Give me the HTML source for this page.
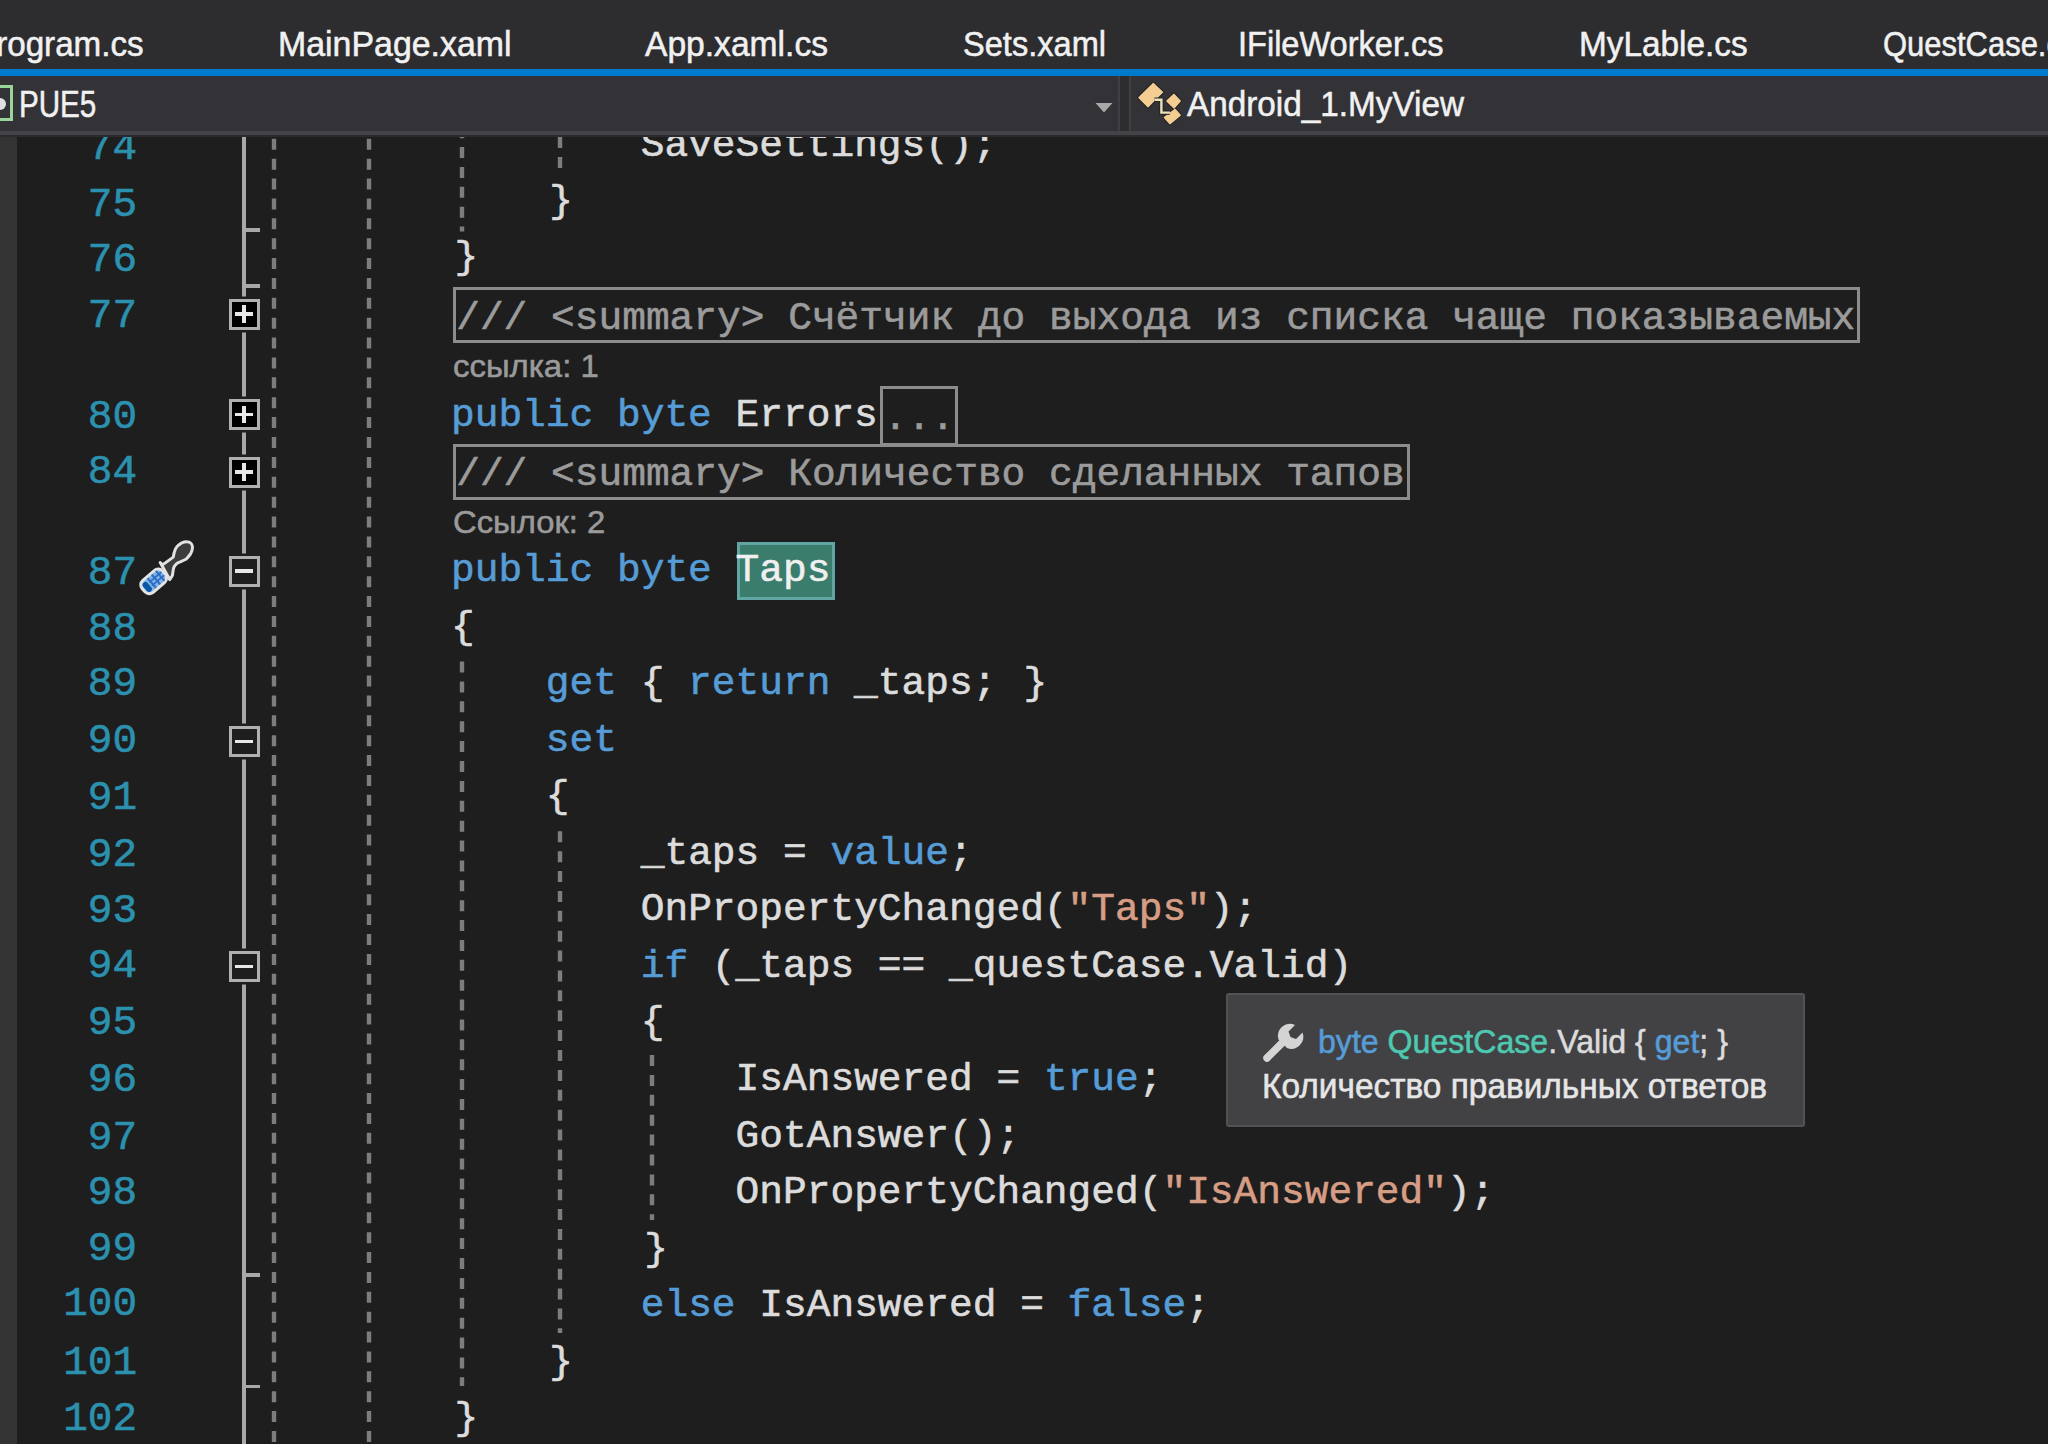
<!DOCTYPE html>
<html><head><meta charset="utf-8"><title>VS editor</title>
<style>
html,body{margin:0;padding:0;}
body{width:2048px;height:1444px;overflow:hidden;background:#1e1e1e;position:relative;}
.a{position:absolute;white-space:pre;}
.m{font-family:"Liberation Mono",monospace;font-size:39.527px;line-height:40.0px;-webkit-text-stroke:0.6px currentColor;}
.s{font-family:"Liberation Sans",sans-serif;-webkit-text-stroke:0.55px currentColor;}
</style></head><body>
<div class="a" style="left:0.00px;top:136.00px;width:2048.00px;height:1308.00px;background:#1e1e1e"></div>
<div class="a" style="left:0.00px;top:136.00px;width:17.00px;height:1308.00px;background:#333333"></div>
<div class="a m" style="left:87.83px;top:128.09px;color:#2b91af;font-size:41.00px">74</div>
<div class="a m" style="left:87.83px;top:184.79px;color:#2b91af;font-size:41.00px">75</div>
<div class="a m" style="left:87.83px;top:240.39px;color:#2b91af;font-size:41.00px">76</div>
<div class="a m" style="left:87.83px;top:295.69px;color:#2b91af;font-size:41.00px">77</div>
<div class="a m" style="left:87.83px;top:397.29px;color:#2b91af;font-size:41.00px">80</div>
<div class="a m" style="left:87.83px;top:452.09px;color:#2b91af;font-size:41.00px">84</div>
<div class="a m" style="left:87.83px;top:553.09px;color:#2b91af;font-size:41.00px">87</div>
<div class="a m" style="left:87.83px;top:608.79px;color:#2b91af;font-size:41.00px">88</div>
<div class="a m" style="left:87.83px;top:664.49px;color:#2b91af;font-size:41.00px">89</div>
<div class="a m" style="left:87.83px;top:721.09px;color:#2b91af;font-size:41.00px">90</div>
<div class="a m" style="left:87.83px;top:778.39px;color:#2b91af;font-size:41.00px">91</div>
<div class="a m" style="left:87.83px;top:834.59px;color:#2b91af;font-size:41.00px">92</div>
<div class="a m" style="left:87.83px;top:890.59px;color:#2b91af;font-size:41.00px">93</div>
<div class="a m" style="left:87.83px;top:945.89px;color:#2b91af;font-size:41.00px">94</div>
<div class="a m" style="left:87.83px;top:1002.69px;color:#2b91af;font-size:41.00px">95</div>
<div class="a m" style="left:87.83px;top:1060.39px;color:#2b91af;font-size:41.00px">96</div>
<div class="a m" style="left:87.83px;top:1117.89px;color:#2b91af;font-size:41.00px">97</div>
<div class="a m" style="left:87.83px;top:1173.09px;color:#2b91af;font-size:41.00px">98</div>
<div class="a m" style="left:87.83px;top:1229.09px;color:#2b91af;font-size:41.00px">99</div>
<div class="a m" style="left:63.23px;top:1284.09px;color:#2b91af;font-size:41.00px">100</div>
<div class="a m" style="left:63.23px;top:1342.89px;color:#2b91af;font-size:41.00px">101</div>
<div class="a m" style="left:63.23px;top:1398.89px;color:#2b91af;font-size:41.00px">102</div>
<div class="a" style="left:242.00px;top:136.00px;width:4.20px;height:1308.00px;background:#a8a8a8"></div>
<div class="a" style="left:242.00px;top:228.20px;width:17.50px;height:3.60px;background:#a8a8a8"></div>
<div class="a" style="left:242.00px;top:284.20px;width:17.50px;height:3.60px;background:#a8a8a8"></div>
<div class="a" style="left:242.00px;top:1273.00px;width:17.50px;height:3.60px;background:#a8a8a8"></div>
<div class="a" style="left:242.00px;top:1384.80px;width:17.50px;height:3.60px;background:#a8a8a8"></div>
<div class="a" style="left:228.60px;top:298.50px;width:31.00px;height:31.00px;background:#000000;border:3.5px solid #b0b0b0;box-sizing:border-box;box-shadow:0 0 0 2.5px #1e1e1e"></div>
<div class="a" style="left:235.30px;top:312.30px;width:17.60px;height:3.40px;background:#e8e8e8"></div>
<div class="a" style="left:242.40px;top:305.40px;width:3.40px;height:17.20px;background:#e8e8e8"></div>
<div class="a" style="left:228.60px;top:399.10px;width:31.00px;height:31.00px;background:#000000;border:3.5px solid #b0b0b0;box-sizing:border-box;box-shadow:0 0 0 2.5px #1e1e1e"></div>
<div class="a" style="left:235.30px;top:412.90px;width:17.60px;height:3.40px;background:#e8e8e8"></div>
<div class="a" style="left:242.40px;top:406.00px;width:3.40px;height:17.20px;background:#e8e8e8"></div>
<div class="a" style="left:228.60px;top:456.50px;width:31.00px;height:31.00px;background:#000000;border:3.5px solid #b0b0b0;box-sizing:border-box;box-shadow:0 0 0 2.5px #1e1e1e"></div>
<div class="a" style="left:235.30px;top:470.30px;width:17.60px;height:3.40px;background:#e8e8e8"></div>
<div class="a" style="left:242.40px;top:463.40px;width:3.40px;height:17.20px;background:#e8e8e8"></div>
<div class="a" style="left:228.60px;top:555.50px;width:31.00px;height:31.00px;background:#1e1e1e;border:3.5px solid #b0b0b0;box-sizing:border-box;box-shadow:0 0 0 2.5px #1e1e1e"></div>
<div class="a" style="left:235.30px;top:569.30px;width:17.60px;height:3.40px;background:#e8e8e8"></div>
<div class="a" style="left:228.60px;top:726.20px;width:31.00px;height:31.00px;background:#1e1e1e;border:3.5px solid #b0b0b0;box-sizing:border-box;box-shadow:0 0 0 2.5px #1e1e1e"></div>
<div class="a" style="left:235.30px;top:740.00px;width:17.60px;height:3.40px;background:#e8e8e8"></div>
<div class="a" style="left:228.60px;top:951.00px;width:31.00px;height:31.00px;background:#1e1e1e;border:3.5px solid #b0b0b0;box-sizing:border-box;box-shadow:0 0 0 2.5px #1e1e1e"></div>
<div class="a" style="left:235.30px;top:964.80px;width:17.60px;height:3.40px;background:#e8e8e8"></div>
<svg class="a" style="left:270.10px;top:136.00px" width="8" height="1308.00"><line x1="4" y1="0" x2="4" y2="1308.00" stroke="#7d7d7d" stroke-width="4.4" stroke-dasharray="11.00 8.88" stroke-dashoffset="17.08"/></svg>
<svg class="a" style="left:365.20px;top:136.00px" width="8" height="1308.00"><line x1="4" y1="0" x2="4" y2="1308.00" stroke="#7d7d7d" stroke-width="4.4" stroke-dasharray="11.00 8.88" stroke-dashoffset="17.08"/></svg>
<svg class="a" style="left:458.30px;top:136.00px" width="8" height="95.50"><line x1="4" y1="0" x2="4" y2="95.50" stroke="#7d7d7d" stroke-width="4.4" stroke-dasharray="11.00 8.88" stroke-dashoffset="8.78"/></svg>
<svg class="a" style="left:458.30px;top:658.00px" width="8" height="728.00"><line x1="4" y1="0" x2="4" y2="728.00" stroke="#7d7d7d" stroke-width="4.4" stroke-dasharray="11.00 8.88" stroke-dashoffset="16.28"/></svg>
<svg class="a" style="left:555.80px;top:136.00px" width="8" height="32.00"><line x1="4" y1="0" x2="4" y2="32.00" stroke="#7d7d7d" stroke-width="4.4" stroke-dasharray="11.00 8.88" stroke-dashoffset="18.76"/></svg>
<svg class="a" style="left:555.80px;top:829.00px" width="8" height="504.00"><line x1="4" y1="0" x2="4" y2="504.00" stroke="#7d7d7d" stroke-width="4.4" stroke-dasharray="11.00 8.88" stroke-dashoffset="17.56"/></svg>
<svg class="a" style="left:648.00px;top:1052.00px" width="8" height="168.00"><line x1="4" y1="0" x2="4" y2="168.00" stroke="#7d7d7d" stroke-width="4.4" stroke-dasharray="11.00 8.88" stroke-dashoffset="16.78"/></svg>
<div class="a m" style="left:640.72px;top:125.68px;"><span style="color:#dcdcdc">SaveSettings();</span></div>
<div class="a m" style="left:545.84px;top:182.08px;"><span style="color:#dcdcdc"><span style="position:relative;left:3.5px">}</span></span></div>
<div class="a m" style="left:450.96px;top:238.48px;"><span style="color:#dcdcdc"><span style="position:relative;left:3.5px">}</span></span></div>
<div class="a" style="left:452.50px;top:286.80px;width:1407.88px;height:56.70px;border:3.7px solid #8c8c8c;box-sizing:border-box"></div>
<div class="a m" style="left:456.20px;top:298.58px;color:#9b9b9b">/// &lt;summary&gt; Счётчик до выхода из списка чаще показываемых</div>
<div class="a s" style="left:452.60px;top:349.80px;font-size:32.00px;line-height:32.00px;color:#9a9a9a;transform:scaleX(1.0281);transform-origin:0 0;">ссылка: 1</div>
<div class="a m" style="left:450.96px;top:395.88px;"><span style="color:#569cd6">public</span><span style="color:#dcdcdc"> </span><span style="color:#569cd6">byte</span><span style="color:#dcdcdc"> Errors</span></div>
<div class="a" style="left:880.00px;top:385.70px;width:78.00px;height:60.30px;border:3.5px solid #8c8c8c;box-sizing:border-box"></div>
<div class="a m" style="left:883.50px;top:399.48px;color:#9b9b9b">...</div>
<div class="a" style="left:452.50px;top:444.20px;width:957.20px;height:55.60px;border:3.7px solid #8c8c8c;box-sizing:border-box"></div>
<div class="a m" style="left:456.20px;top:455.18px;color:#9b9b9b">/// &lt;summary&gt; Количество сделанных тапов</div>
<div class="a s" style="left:452.93px;top:506.00px;font-size:32.00px;line-height:32.00px;color:#9a9a9a;transform:scaleX(1.0247);transform-origin:0 0;">Ссылок: 2</div>
<div class="a" style="left:737.00px;top:541.70px;width:97.50px;height:58.60px;background:#3a7d6c;border:3px solid #62a6a4;box-sizing:border-box"></div>
<div class="a m" style="left:450.96px;top:550.98px;"><span style="color:#569cd6">public</span><span style="color:#dcdcdc"> </span><span style="color:#569cd6">byte</span><span style="color:#dcdcdc"> </span><span style="color:#f0f0f0">Taps</span></div>
<div class="a m" style="left:450.96px;top:607.54px;"><span style="color:#dcdcdc">{</span></div>
<div class="a m" style="left:545.84px;top:664.10px;"><span style="color:#569cd6">get</span><span style="color:#dcdcdc"> { </span><span style="color:#569cd6">return</span><span style="color:#dcdcdc"> _taps; <span style="position:relative;left:3.5px">}</span></span></div>
<div class="a m" style="left:545.84px;top:720.66px;"><span style="color:#569cd6">set</span></div>
<div class="a m" style="left:545.84px;top:777.22px;"><span style="color:#dcdcdc">{</span></div>
<div class="a m" style="left:640.72px;top:833.78px;"><span style="color:#dcdcdc">_taps = </span><span style="color:#569cd6">value</span><span style="color:#dcdcdc">;</span></div>
<div class="a m" style="left:640.72px;top:890.34px;"><span style="color:#dcdcdc">OnPropertyChanged(</span><span style="color:#d69d85">"Taps"</span><span style="color:#dcdcdc">);</span></div>
<div class="a m" style="left:640.72px;top:946.90px;"><span style="color:#569cd6">if</span><span style="color:#dcdcdc"> (_taps == _questCase.Valid)</span></div>
<div class="a m" style="left:640.72px;top:1003.46px;"><span style="color:#dcdcdc">{</span></div>
<div class="a m" style="left:735.60px;top:1060.02px;"><span style="color:#dcdcdc">IsAnswered = </span><span style="color:#569cd6">true</span><span style="color:#dcdcdc">;</span></div>
<div class="a m" style="left:735.60px;top:1116.58px;"><span style="color:#dcdcdc">GotAnswer();</span></div>
<div class="a m" style="left:735.60px;top:1173.14px;"><span style="color:#dcdcdc">OnPropertyChanged(</span><span style="color:#d69d85">"IsAnswered"</span><span style="color:#dcdcdc">);</span></div>
<div class="a m" style="left:640.72px;top:1229.70px;"><span style="color:#dcdcdc"><span style="position:relative;left:3.5px">}</span></span></div>
<div class="a m" style="left:640.72px;top:1286.26px;"><span style="color:#569cd6">else</span><span style="color:#dcdcdc"> IsAnswered = </span><span style="color:#569cd6">false</span><span style="color:#dcdcdc">;</span></div>
<div class="a m" style="left:545.84px;top:1342.82px;"><span style="color:#dcdcdc"><span style="position:relative;left:3.5px">}</span></span></div>
<div class="a m" style="left:450.96px;top:1399.38px;"><span style="color:#dcdcdc"><span style="position:relative;left:3.5px">}</span></span></div>
<svg class="a" style="left:130px;top:530px" width="75" height="75" viewBox="130 530 75 75"><path d="M160.2 562.5 L162.5 564.9 L173.3 557.1 C173.8 553.5 175.5 547.5 178.2 545.4 C181 543 184 541.5 186.8 541.8 C190 542 192.5 544 192.5 547 C192.5 550 191.5 552.5 190.5 554 C189 556 187.5 558 185.9 559.3 C182 561.5 178.5 562 176.4 563.8 C174.5 565.5 173.5 567 173.3 569.2 L172.4 575.5 L169.7 579.6 Z" fill="#3c3c3c" stroke="#e2e2e2" stroke-width="3" stroke-linejoin="round"/><g transform="translate(153.7 581.4) rotate(-40.6)"><rect x="-13.5" y="-7.9" width="27" height="15.8" rx="6" ry="6" fill="#80b2e8" stroke="#e4e4e4" stroke-width="3"/><path d="M-2.5 -6.5 L-2.5 6.5 M3 -6.5 L3 6.5 M8.5 -6.5 L8.5 6.5" stroke="#2e6fc4" stroke-width="2"/><path d="M-4 -2.1 L12 -2.1 M-4 2.1 L12 2.1" stroke="#2e6fc4" stroke-width="1.7"/><rect x="-11.3" y="-5.6" width="5.6" height="11.2" rx="2.8" fill="#0b57a8"/></g></svg>
<div class="a" style="left:1226.40px;top:993.40px;width:578.80px;height:134.10px;background:#424245;border:2px solid #525256;box-sizing:border-box;border-radius:3px"></div>
<svg class="a" style="left:1260px;top:1020px" width="46" height="44" viewBox="0 0 46 44"><path d="M7 38 L23 22" stroke="#d4d4d4" stroke-width="7.5" stroke-linecap="round"/><path d="M18.5 19.5 A12 12 0 0 1 35 5 L28.5 11.5 L30.5 17 L36 19 L42.5 12.5 A12 12 0 0 1 27 28 Z" fill="#d4d4d4"/></svg>
<div class="a s" style="left:1318.23px;top:1024.63px;font-size:33.50px;line-height:33.50px;color:#dcdcdc;transform:scaleX(0.9583);transform-origin:0 0;"><span style="color:#569cd6">byte</span><span style="color:#dcdcdc"> </span><span style="color:#4ec9b0">QuestCase</span><span style="color:#dcdcdc">.Valid { </span><span style="color:#569cd6">get</span><span style="color:#dcdcdc">; }</span></div>
<div class="a s" style="left:1261.56px;top:1067.76px;font-size:35.00px;line-height:35.00px;color:#e6e6e6;transform:scaleX(0.9546);transform-origin:0 0;">Количество правильных ответов</div>
<div class="a" style="left:0.00px;top:0.00px;width:2048.00px;height:69.00px;background:#2d2d30"></div>
<div class="a s" style="left:278.02px;top:26.26px;font-size:35.00px;line-height:35.00px;color:#f1f1f1;transform:scaleX(0.9682);transform-origin:0 0;">MainPage.xaml</div>
<div class="a s" style="left:645.43px;top:26.26px;font-size:35.00px;line-height:35.00px;color:#f1f1f1;transform:scaleX(0.9599);transform-origin:0 0;">App.xaml.cs</div>
<div class="a s" style="left:963.12px;top:26.26px;font-size:35.00px;line-height:35.00px;color:#f1f1f1;transform:scaleX(0.9310);transform-origin:0 0;">Sets.xaml</div>
<div class="a s" style="left:1237.80px;top:26.26px;font-size:35.00px;line-height:35.00px;color:#f1f1f1;transform:scaleX(0.9296);transform-origin:0 0;">IFileWorker.cs</div>
<div class="a s" style="left:1578.87px;top:26.26px;font-size:35.00px;line-height:35.00px;color:#f1f1f1;transform:scaleX(0.9521);transform-origin:0 0;">MyLable.cs</div>
<div class="a s" style="left:-25.66px;top:26.26px;font-size:35.00px;line-height:35.00px;color:#f1f1f1;transform:scaleX(0.9482);transform-origin:0 0;">Program.cs</div>
<div class="a s" style="left:1882.53px;top:26.26px;font-size:35.00px;line-height:35.00px;color:#f1f1f1;transform:scaleX(0.8844);transform-origin:0 0;">QuestCase.cs</div>
<div class="a" style="left:0.00px;top:69.00px;width:2048.00px;height:7.00px;background:#007acc"></div>
<div class="a" style="left:0.00px;top:76.00px;width:2048.00px;height:60.00px;background:#2d2d30"></div>
<div class="a" style="left:-10.00px;top:76.00px;width:1130.00px;height:57.00px;background:#333337;border:2px solid #3f3f46;border-top:none;box-sizing:border-box"></div>
<div class="a" style="left:1129.00px;top:76.00px;width:931.00px;height:57.00px;background:#333337;border:2px solid #3f3f46;border-top:none;box-sizing:border-box"></div>
<div class="a" style="left:0.00px;top:131.00px;width:2048.00px;height:3.80px;background:#434348"></div>
<div class="a" style="left:0.00px;top:134.80px;width:2048.00px;height:2.60px;background:#2b2b2f"></div>
<svg class="a" style="left:1094px;top:102px" width="20" height="12"><path d="M1.5 1 L18.5 1 L10 10.5 Z" fill="#a8a8a8"/></svg>
<svg class="a" style="left:-20px;top:85px" width="34" height="37"><rect x="1.5" y="1.5" width="30" height="33" fill="none" stroke="#9ad49a" stroke-width="3"/><circle cx="20" cy="19" r="6" fill="#e0e0e0"/></svg>
<div class="a s" style="left:19.17px;top:85.87px;font-size:37.00px;line-height:37.00px;color:#f1f1f1;transform:scaleX(0.7994);transform-origin:0 0;">PUE5</div>
<svg class="a" style="left:1135px;top:79px" width="50" height="50" viewBox="1135 79 50 50"><g fill="#252527" stroke="#252527" stroke-width="3.5" stroke-linejoin="round"><path d="M1153.3 83.5 L1162.6 92.2 L1148 106.9 L1138.8 97.6 Z"/><path d="M1174 94.3 L1180.3 101 L1174 108 L1166.8 101 Z"/><path d="M1175.2 109.3 L1180.3 115.2 L1170 123.8 L1164.3 117.5 Z"/></g><g fill="#f3cd91" stroke="#f3cd91" stroke-width="1.2" stroke-linejoin="round"><path d="M1153.3 83.5 L1162.6 92.2 L1148 106.9 L1138.8 97.6 Z"/><path d="M1174 94.3 L1180.3 101 L1174 108 L1166.8 101 Z"/><path d="M1175.2 109.3 L1180.3 115.2 L1170 123.8 L1164.3 117.5 Z"/></g><path d="M1154.5 99.7 L1161.4 99.7 L1161.4 112.6 L1170 112.6" fill="none" stroke="#252527" stroke-width="4.5"/><path d="M1154.5 99.7 L1161.4 99.7 L1161.4 112.6 L1170 112.6" fill="none" stroke="#ece0b8" stroke-width="2.4"/></svg>
<div class="a s" style="left:1187.23px;top:86.94px;font-size:35.50px;line-height:35.50px;color:#f1f1f1;transform:scaleX(0.9379);transform-origin:0 0;">Android_1.MyView</div>
</body></html>
